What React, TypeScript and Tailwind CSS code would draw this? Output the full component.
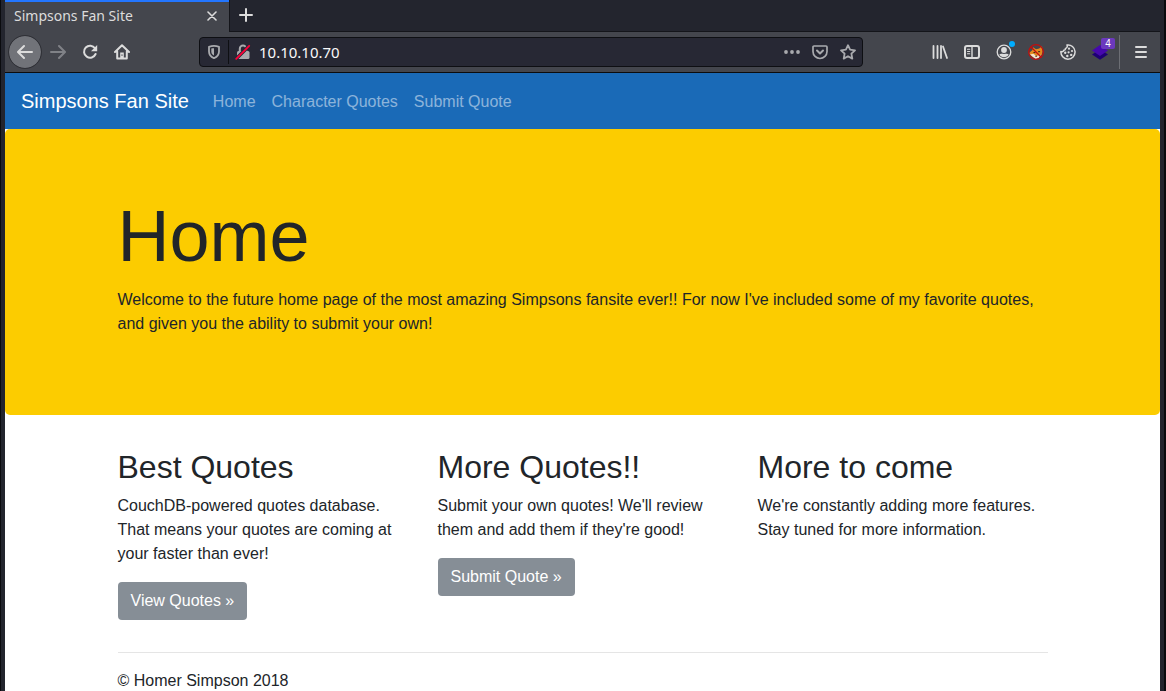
import type { ReactNode } from "react";

function Svg({ children }: { children: ReactNode }) {
  return (
    <svg viewBox="0 0 16 16" className="size-4 shrink-0" fill="none" stroke="currentColor" strokeWidth="2" strokeLinecap="round" strokeLinejoin="round" aria-hidden="true">
      {children}
    </svg>
  );
}

function ToolButton({ label, children }: { label: string; children: ReactNode }) {
  return (
    <button type="button" aria-label={label} className="relative flex size-8 items-center justify-center">
      {children}
    </button>
  );
}

const navLinks = ["Home", "Character Quotes", "Submit Quote"];

const columns = [
  {
    title: "Best Quotes",
    body: "CouchDB-powered quotes database. That means your quotes are coming at your faster than ever!",
    action: "View Quotes »",
  },
  {
    title: "More Quotes!!",
    body: "Submit your own quotes! We'll review them and add them if they're good!",
    action: "Submit Quote »",
  },
  {
    title: "More to come",
    body: "We're constantly adding more features. Stay tuned for more information.",
  },
];

function TabStrip() {
  return (
    <div className="flex h-8 bg-[#23252e]">
      <div className="flex w-56 items-center justify-between border-t-2 border-[#2376ff] bg-[#44464d] pr-3 pb-0.5 pl-[9px] text-[#dcdcdc]">
        <span className="text-sm">Simpsons Fan Site</span>
        <button type="button" aria-label="Close tab">
          <svg viewBox="0 0 10 10" className="size-[10px]" fill="none" stroke="currentColor" strokeWidth="1.6" strokeLinecap="round">
            <path d="M1 1l8 8M9 1L1 9" />
          </svg>
        </button>
      </div>
      <div className="flex flex-1 items-center border-b border-l border-[#14151a] pb-px pl-[9px] text-[#dcdcdc]">
        <button type="button" aria-label="New tab">
          <svg viewBox="0 0 14 14" className="size-[14px]" fill="none" stroke="currentColor" strokeWidth="2" strokeLinecap="round">
            <path d="M7 1v12M1 7h12" />
          </svg>
        </button>
      </div>
    </div>
  );
}

function AddressBar() {
  return (
    <div className="flex h-[30px] w-[664px] items-center rounded-sm border border-[#0e0f13] bg-[#272834] text-[#a9aaae]">
      <div className="flex h-6 w-[29px] items-center justify-center border-r border-[#0e0f13]">
        <Svg>
          <path d="M8 1.9c1.7 0 3.4.3 5 .9v4.600c0 3-1.800 5.300-5 6.800-3.200-1.500-5-3.800-5-6.800V2.800c1.600-.6 3.300-.9 5-.9z" strokeWidth="1.8" />
          <path d="M8 4.200v7.400C6.200 10.600 5.300 9.200 5.300 7.400V4.600C6.200 4.300 7 4.200 8 4.200z" fill="currentColor" stroke="none" />
        </Svg>
      </div>
      <span className="ml-[6px]">
        <Svg>
          <path d="M4.800 7V4.800a3.200 3.200 0 0 1 6.400 0V7" strokeLinecap="butt" />
          <rect x="2" y="7" width="12.500" height="8" rx="1.500" fill="currentColor" stroke="none" />
          <path d="M1.200 14.800L14.200 1.800" stroke="#272834" strokeWidth="3.400" />
          <path d="M1.200 14.800L14.200 1.800" stroke="#ff0039" strokeWidth="1.800" />
        </Svg>
      </span>
      <input aria-label="Address" defaultValue="10.10.10.70" className="ml-2 min-w-0 flex-1 bg-transparent text-[15px] text-[#f9f9fa] outline-none" />
      <div className="mr-[6px] flex items-center gap-3">
        <button type="button" aria-label="Page actions">
          <svg viewBox="0 0 16 16" className="size-4" fill="currentColor">
            <circle cx="2" cy="8" r="1.900" />
            <circle cx="8" cy="8" r="1.900" />
            <circle cx="14" cy="8" r="1.900" />
          </svg>
        </button>
        <button type="button" aria-label="Save to Pocket">
          <Svg>
            <path d="M2 2h12a1 1 0 0 1 1 1v4.500a7 7 0 0 1-14 0V3a1 1 0 0 1 1-1z" strokeWidth="1.700" />
            <path d="M5 6.500l3 3 3-3" />
          </Svg>
        </button>
        <button type="button" aria-label="Bookmark">
          <Svg>
            <path d="M8 1.200l2.100 4.500 4.900.6-3.600 3.400.9 4.900L8 12.200l-4.300 2.400.9-4.900L1 6.300l4.900-.6z" strokeWidth="1.800" />
          </Svg>
        </button>
      </div>
    </div>
  );
}

function Toolbar() {
  return (
    <div className="flex h-[41px] items-center justify-between border-b border-[#0c0c0d] bg-[#44464d] pr-[3px] pl-1 text-[#dcdcdc]">
      <div className="flex w-[190px] shrink-0 items-center">
        <button type="button" aria-label="Back" className="mr-px flex size-8 items-center justify-center rounded-full bg-[#717379] outline outline-[#2f3036]">
          <Svg><path d="M15 8H1.500M7 2L1 8l6 6" /></Svg>
        </button>
        <button type="button" aria-label="Forward" disabled className="flex size-8 items-center justify-center text-[#808287]">
          <Svg><path d="M1 8h13.500M9 2l6 6-6 6" /></Svg>
        </button>
        <ToolButton label="Reload">
          <Svg>
            <path d="M13 4.300A6 6 0 1 0 13.600 10" />
            <path d="M15.200 1v6.300H9z" fill="currentColor" stroke="none" />
          </Svg>
        </ToolButton>
        <ToolButton label="Home">
          <Svg>
            <path d="M1 8l7-6.800L15 8M3.200 7.500V14.500h9.600V7.500" />
            <path d="M6.200 8.500h3.600v5.500H6.200z" fill="currentColor" stroke="none" />
            <path d="M8 10.500v1.200" stroke="#44464d" strokeWidth="1.200" strokeLinecap="butt" />
          </Svg>
        </ToolButton>
      </div>
      <AddressBar />
      <div className="ml-auto flex items-center">
        <ToolButton label="Library">
          <svg viewBox="0 0 16 16" className="size-4" fill="none" stroke="currentColor" strokeWidth="2" strokeLinecap="round">
            <path d="M1.500 2v12M5.500 2v12M9 2v12M11 2.500l4 11.500" strokeWidth="1.800" />
          </svg>
        </ToolButton>
        <ToolButton label="Sidebars">
          <Svg>
            <rect x="1" y="2" width="14" height="12" rx="2" />
            <path d="M8 2v12" strokeWidth="1.400" />
            <path d="M3.500 5.200h2.200M3.500 7.500h2.200M3.500 9.800h2.200" strokeWidth="1.100" />
          </Svg>
        </ToolButton>
        <ToolButton label="Account">
          <Svg>
            <circle cx="8" cy="8" r="6.800" strokeWidth="1.300" />
            <circle cx="8" cy="6" r="2.900" fill="currentColor" stroke="none" />
            <path d="M3.300 10.500C4.500 9.400 6 10 8 10s3.500-.6 4.700.5C11.700 12.300 10 13.200 8 13.200s-3.700-.9-4.700-2.700z" fill="currentColor" stroke="none" />
          </Svg>
          <span className="absolute top-[5px] right-[5px] size-[6px] rounded-full bg-[#00adff]" />
        </ToolButton>
        <ToolButton label="Proxy switcher">
          <Svg>
            <path d="M1.200 9.500C2 7.500 3.500 7 4.500 6L5 3.200 8 5.200l3.200-.6L14 2.200l.6 5.300-1 3.500L9 14.500 4.500 13z" fill="#e38a1e" stroke="none" />
            <path d="M2 10.500l3.500-.8 2.700 2.300 4.800-1.200-2.500 3.200-3 1z" fill="#f1e3d0" stroke="none" />
            <path d="M5.800 8.600h1.200M10.500 7.700h1.200M7.700 12.200h1" stroke="#3b2416" strokeWidth="1" />
            <circle cx="8" cy="8" r="7.300" stroke="#c40d0d" strokeWidth="1.200" />
            <path d="M3 3l10 10" stroke="#c40d0d" strokeWidth="1.300" />
          </Svg>
        </ToolButton>
        <ToolButton label="Cookies">
          <Svg>
            <path d="M7 1A7.100 7.100 0 1 1 .9 7.400C2 8.100 3.600 7.500 3.700 6.200 4.800 6.300 5.600 5.500 5.400 4.400 6.800 4.200 7.700 2.700 7 1z" strokeWidth="1.500" />
            <g fill="currentColor" stroke="none">
              <circle cx="9" cy="4.700" r="1.100" />
              <circle cx="12" cy="7" r="1.100" />
              <circle cx="5.200" cy="8.800" r="1.200" />
              <circle cx="8.600" cy="8.300" r="1.100" />
              <circle cx="7.300" cy="12" r="1.200" />
              <circle cx="11.200" cy="10.900" r="1.200" />
            </g>
          </Svg>
        </ToolButton>
        <ToolButton label="Technologies">
          <Svg>
            <path d="M0 10.500L8 5l8 5.500-8 5.300z" fill="#1e0074" stroke="none" />
            <path d="M0 6.500L8 1l8 5.500L8 12z" fill="#4608ad" stroke="none" />
          </Svg>
          <span className="absolute top-[2px] right-px flex h-[11px] w-[14px] items-center justify-center rounded-[2px] bg-[#6b39bd] font-['Liberation_Sans',sans-serif] text-[10px] leading-none text-white">4</span>
        </ToolButton>
        <div className="ml-[3px] flex h-[34px] items-center border-l border-[#6c6e74] pl-[5px]">
          <ToolButton label="Menu">
            <Svg><path d="M3 3h10M3 8h10M3 13h10" /></Svg>
          </ToolButton>
        </div>
      </div>
    </div>
  );
}

export default function App() {
  return (
    <div className="h-screen overflow-hidden border-r-2 border-l border-[#0a0b0e] bg-[#23252e]">
      <div className="flex h-full flex-col px-1 font-['Noto_Sans',sans-serif]">
        <header>
          <TabStrip />
          <Toolbar />
        </header>
        <div className="min-h-0 flex-1 overflow-hidden bg-white font-['Liberation_Sans',Arial,sans-serif] text-base text-[#212529]">
          <nav className="flex h-14 items-center bg-[#1a6ab7] px-4">
            <a href="#" className="mr-4 text-xl text-white">Simpsons Fan Site</a>
            <div className="flex pt-0.5">
              {navLinks.map((link) => (
                <a key={link} href="#" className="p-2 text-white/50">{link}</a>
              ))}
            </div>
          </nav>
          <section className="mb-8 rounded-[5px] bg-[#fccc00] px-8 pt-16 pb-[63px]">
            <div className="mx-auto max-w-[930px]">
              <h1 className="mb-[9px] text-[72px] leading-[1.2]">Home</h1>
              <p className="mb-4">
                Welcome to the future home page of the most amazing Simpsons fansite ever!! For now I've included some of my favorite quotes, and given you the ability to submit your own!
              </p>
            </div>
          </section>
          <main className="mx-auto max-w-[930px]">
            <div className="grid grid-cols-3 gap-[30px]">
              {columns.map((column) => (
                <section key={column.title}>
                  <h2 className="mb-[7px] text-[32px] leading-10">{column.title}</h2>
                  <p className="mb-4">{column.body}</p>
                  {column.action && (
                    <button type="button" className="mb-4 h-[38px] rounded-[4px] bg-[#868e96] px-[13px] text-white">{column.action}</button>
                  )}
                </section>
              ))}
            </div>
            <hr className="my-4 border-[#e5e5e5]" />
          </main>
          <footer className="mx-auto max-w-[930px]">
            <p>© Homer Simpson 2018</p>
          </footer>
        </div>
      </div>
    </div>
  );
}
